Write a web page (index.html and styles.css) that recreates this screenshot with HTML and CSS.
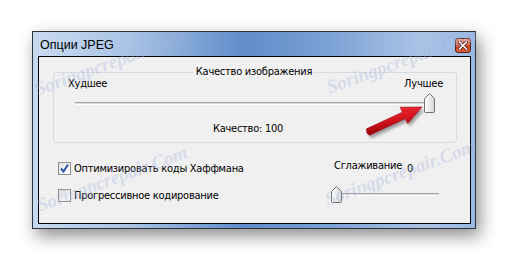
FILE: index.html
```html
<!DOCTYPE html>
<html lang="ru">
<head>
<meta charset="utf-8">
<title>Опции JPEG</title>
<link rel="stylesheet" href="styles.css">
</head>
<body>
<div class="window">
  <div class="titlebar">
    <span class="title">Опции JPEG</span>
    <span class="close"><svg width="10" height="9" viewBox="0 0 10 9"><path d="M1.5 1 L8.5 8 M8.5 1 L1.5 8" stroke="#5a1a10" stroke-width="3.2" stroke-linecap="square"/><path d="M1.5 1 L8.5 8 M8.5 1 L1.5 8" stroke="#fff" stroke-width="1.6" stroke-linecap="square"/></svg></span>
  </div>
  <div class="content">
    <div class="group">
      <div class="legend">Качество изображения</div>
      <div class="ends"><span>Худшее</span><span>Лучшее</span></div>
      <div class="slider big">
        <div class="track"></div>
        <svg class="thumb" width="11" height="20" viewBox="0 0 11 20"><defs><linearGradient id="tg" x1="0" y1="0" x2="1" y2="0"><stop offset="0" stop-color="#ffffff"/><stop offset="1" stop-color="#d6d6d6"/></linearGradient></defs><path d="M0.5 5.5 L5.5 0.5 L10.5 5.5 V18.5 Q10.5 19.5 9.5 19.5 H1.5 Q0.5 19.5 0.5 18.5 Z" fill="url(#tg)" stroke="#707070"/></svg>
      </div>
      <div class="quality">Качество: 100</div>
    </div>
    <div class="options">
      <div class="checks">
        <div class="check"><span class="box checked"><svg width="11" height="11" viewBox="0 0 11 11"><path d="M2 5.5 L4.5 8.5 L9 1.5" fill="none" stroke="#2b55a8" stroke-width="2"/></svg></span>Оптимизировать коды Хаффмана</div>
        <div class="check"><span class="box"></span>Прогрессивное кодирование</div>
      </div>
      <div class="smooth">
        <div class="smooth-label">Сглаживание <span class="val">0</span></div>
        <div class="slider small">
          <div class="track"></div>
          <svg class="thumb" width="11" height="17" viewBox="0 0 11 17"><defs><linearGradient id="tg2" x1="0" y1="0" x2="1" y2="0"><stop offset="0" stop-color="#ffffff"/><stop offset="1" stop-color="#d6d6d6"/></linearGradient></defs><path d="M0.5 5.5 L5.5 0.5 L10.5 5.5 V15.5 Q10.5 16.5 9.5 16.5 H1.5 Q0.5 16.5 0.5 15.5 Z" fill="url(#tg2)" stroke="#707070"/></svg>
        </div>
      </div>
    </div>
  </div>
</div>
<span class="wm wm1">Soringpcrepair.Com</span>
<span class="wm wm2">Soringpcrepair.Com</span>
<span class="wm wm3">Soringpcrepair.Com</span>
<span class="wm wm4">Soringpcrepair.Com</span>
<svg class="arrow" width="509" height="262" viewBox="0 0 509 262">
  <defs>
    <linearGradient id="ag" x1="0" y1="0" x2="0.3" y2="1"><stop offset="0" stop-color="#f2323a"/><stop offset="0.6" stop-color="#d0101a"/><stop offset="1" stop-color="#8a0008"/></linearGradient>
    <filter id="blur"><feGaussianBlur stdDeviation="1.5"/></filter>
  </defs>
  <path d="M366.5 128.8 L402.4 112.2 L400.1 107.2 L422 107 L407.7 123.6 L405.4 118.6 L369.5 135.2 Q366 134 366.5 128.8 Z" fill="#000" opacity="0.35" transform="translate(2 3)" filter="url(#blur)"/>
  <path d="M366.5 128.8 L402.4 112.2 L400.1 107.2 L422 107 L407.7 123.6 L405.4 118.6 L369.5 135.2 Q366 134 366.5 128.8 Z" fill="url(#ag)" stroke="#9a0010" stroke-width="0.6"/>
</svg>
</body>
</html>
```
FILE: styles.css
```css
html, body {
  margin: 0;
  padding: 0;
  background: #ffffff;
}
body {
  position: relative;
  width: 509px;
  height: 262px;
  overflow: hidden;
  font-family: "DejaVu Sans", Verdana, sans-serif;
  font-stretch: condensed;
  font-size: 11px;
  letter-spacing: -0.25px;
  color: #000;
}
.window {
  margin: 31px 0 0 32px;
  width: 444px;
  height: 198px;
  box-sizing: border-box;
  border: 1px solid #2c3440;
  background: linear-gradient(90deg, #c8daf0 0%, #a9c3e4 22%, #5f8cc9 48%, #7ea3d6 68%, #abc4e6 88%, #9ab8e0 100%);
  padding: 0 4px 4px 5px;
  display: flex;
  flex-direction: column;
  box-shadow: 4px 7px 16px rgba(0,0,0,0.45);
}
.titlebar {
  height: 24px;
  display: flex;
  align-items: flex-start;
  justify-content: space-between;
}
.title {
  font-family: "Liberation Sans", Arial, sans-serif;
  font-stretch: normal;
  letter-spacing: 0;
  font-size: 12.5px;
  line-height: 14px;
  margin-top: 6px;
  margin-left: 2px;
  color: #000;
}
.close {
  margin-top: 6px;
  width: 16px;
  height: 15px;
  box-sizing: border-box;
  border: 1px solid #5c2214;
  border-radius: 3px;
  background: linear-gradient(180deg, #eda38c 0%, #d96a48 45%, #c2401f 55%, #d6603a 100%);
  display: flex;
  align-items: center;
  justify-content: center;
}
.content {
  flex: 1;
  border: 1px solid #000;
  background: #f0f0f0;
  padding: 15px 13px 0 14px;
  display: flex;
  flex-direction: column;
}
.group {
  border: 1px solid #d5dbe0;
  border-radius: 3px;
  height: 71px;
  box-sizing: border-box;
  display: flex;
  flex-direction: column;
}
.legend {
  align-self: center;
  margin-top: -8px;
  line-height: 14px;
  padding: 0 2px;
  background: #f0f0f0;
  margin-left: -2px;
}
.ends {
  display: flex;
  justify-content: space-between;
  padding: 0 13px 0 14px;
  line-height: 13px;
  margin-top: -2px;
}
.slider {
  display: grid;
}
.slider > * {
  grid-area: 1 / 1;
}
.big {
  margin: 3px 21px 0 21px;
}
.track {
  align-self: center;
  border-top: 1px solid #a3a3a3;
  border-bottom: 1px solid #ffffff;
  background: #dcdcdc;
  box-sizing: border-box;
  height: 3px;
}
.big .track {
  margin-right: 5px;
}
.big .thumb {
  justify-self: end;
}
.quality {
  text-align: center;
  line-height: 13px;
  margin-top: 9px;
  padding-right: 14px;
}
.options {
  display: grid;
  grid-template-columns: 278px 1fr;
  margin-top: 18px;
}
.checks {
  display: flex;
  flex-direction: column;
  gap: 11px;
  padding-left: 5px;
}
.check {
  display: flex;
  align-items: center;
  line-height: 16px;
  height: 16px;
}
.box {
  width: 13px;
  height: 13px;
  box-sizing: border-box;
  border: 1px solid #8e8f8f;
  background: linear-gradient(135deg, #dcdcdc, #fbfbfb);
  margin-right: 3px;
  margin-top: -2px;
  display: flex;
  align-items: center;
  justify-content: center;
}
.box.checked {
  background: linear-gradient(135deg, #e4e4e4, #ffffff);
}
.smooth {
  display: flex;
  flex-direction: column;
  margin-top: -2px;
}
.smooth-label {
  padding-left: 3px;
  line-height: 14px;
}
.val {
  margin-left: 2px;
  position: relative;
  top: 3px;
}
.small {
  margin-top: 13px;
  width: 108px;
}
.small .track {
  margin-left: 5px;
}
.small .thumb {
  justify-self: start;
}
.wm {
  position: absolute;
  width: 200px;
  text-align: center;
  font-family: "Liberation Serif", serif;
  font-stretch: normal;
  letter-spacing: 0;
  font-style: italic;
  font-weight: bold;
  font-size: 19px;
  color: rgba(165, 178, 220, 0.36);
  transform: rotate(-20deg);
  white-space: nowrap;
  pointer-events: none;
}
.wm1 { left: 10px; top: 52px; }
.wm2 { left: 302px; top: 50px; }
.wm3 { left: 12px; top: 168px; }
.wm4 { left: 300px; top: 162px; }
.arrow {
  position: absolute;
  left: 0;
  top: 0;
  pointer-events: none;
}
```
